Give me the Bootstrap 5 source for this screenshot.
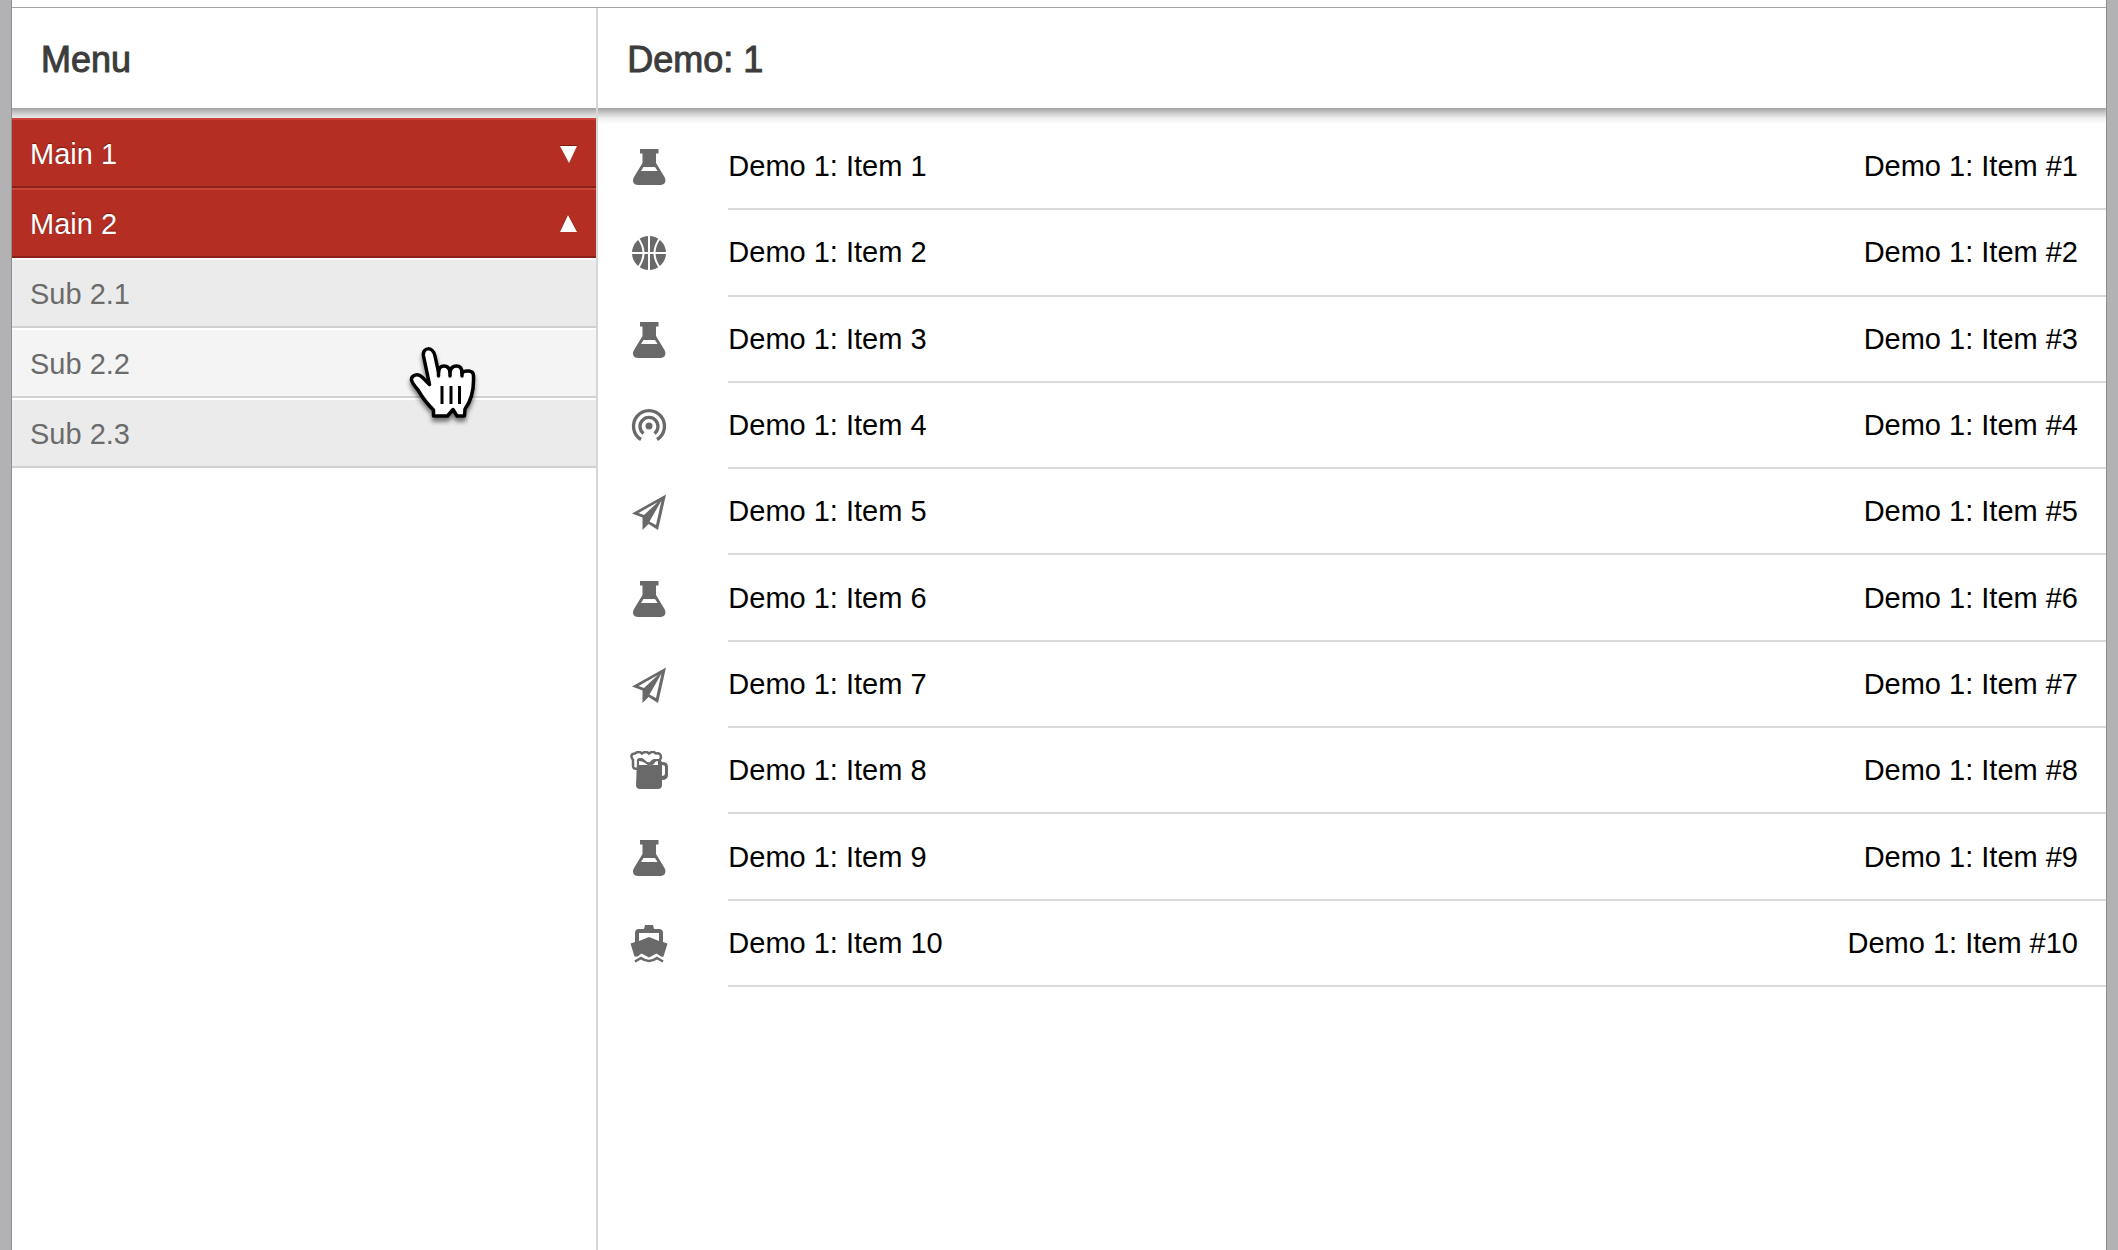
<!DOCTYPE html>
<html lang="en">
<head>
<meta charset="utf-8">
<meta name="viewport" content="width=device-width, initial-scale=1">
<title>Demo: 1</title>
<link href="https://cdn.jsdelivr.net/npm/bootstrap@5.3.0/dist/css/bootstrap.min.css" rel="stylesheet">
<style>
  body { font-family: "Liberation Sans", Arial, sans-serif; font-size: 29px; line-height: 36px; color: #000; background: #b2b2b5; }
  .app-frame { border-left: 12px solid #b2b2b5; border-right: 12px solid #b2b2b5; background: #fff; }
  .frame-edge { border: solid #8e8e90; border-width: 0 1px; margin: 0 -1px; }
  .top-strip { height: 8px; border-bottom: 1px solid #a5a5a5; }
  .side-pane { width: 28%; border-right: 2px solid #d6d6d6; }
  .pane-head { height: 100px; padding: 4px 29px 0; color: #3c3c3c; background: #fff; }
  .pane-head h1, .pane-head h2 { font-size: 36px; line-height: 44px; font-weight: 400; -webkit-text-stroke: 1px #3c3c3c; }
  .pane-body { background: linear-gradient(#a0a0a0, #c9c9c9 30%, #efefef 65%, #fff) top / 100% 16px no-repeat; }
  .menu-list { padding-top: 10px; position: relative; }
  .menu-link { height: 70px; padding: 2px 18px 0; text-decoration: none; width: 100%; border: 0; text-align: left; }
  .menu-main { color: #fff; background: #b42e23; border-top: 2px solid #cb4337; border-bottom: 2px solid #8a211a; text-shadow: 0 -1px 1px #7a1a13; }
  .menu-main svg { width: 18px; height: 18px; filter: drop-shadow(0 -1px 0 #7a1a13); }
  .menu-sub { color: #6b6b6b; background: #ebebeb; border-top: 2px solid #fff; border-bottom: 2px solid #d0d0d0; }
  .menu-sub.hovered { background: #f4f4f4; }
  .item-list { padding: 16px 0 0 31px; height: 879px; }
  .item-icon { width: 99px; flex: none; }
  .item-icon svg { width: 40px; height: 40px; fill: #696969; display: block; }
  .item-body { border-bottom: 2px solid #dadada; padding-right: 28px; }
  .hand { position: absolute; left: 378px; top: 222px; width: 100px; height: 100px; filter: drop-shadow(0 4px 2px rgba(0,0,0,.5)); pointer-events: none; }
</style>
</head>
<body>
<svg class="d-none" aria-hidden="true">
  <symbol id="flask" viewBox="0 0 40 40"><path fill-rule="evenodd" d="M11 2h18.500v4.500H27V16l8.500 14c2.500 5-.5 8-4 8H9c-4 0-6.500-3.500-4-8l8.500-14V6.500H11zM14.500 20l-2.500 4h16.500L26 20z"/></symbol>
  <symbol id="ball" viewBox="0 0 40 40"><circle cx="20" cy="20" r="17"/><path d="M20 2v36M2 20h36M9 5Q20 20 9 35M31 5Q20 20 31 35" fill="none" stroke="#fff" stroke-width="2"/></symbol>
  <symbol id="cast" viewBox="0 0 40 40"><circle cx="20" cy="20" r="3.500"/><path d="M14.500 27.500A9 9 0 1 1 25.500 27.500M12 33.500A15.500 15.500 0 1 1 28 33.500" fill="none" stroke="#696969" stroke-width="3.300"/></symbol>
  <symbol id="plane" viewBox="0 0 40 40"><path fill-rule="evenodd" d="M37 2.500L3 21.500l10.500 4V38l6-6 9.500 6zM32.500 8.500L20.500 29.500l6.500 3.500zM29 10L9.500 21l5.500 2z"/></symbol>
  <symbol id="beer" viewBox="0 0 40 40"><path fill-rule="evenodd" d="M8 11q-1-3 2-4h3l3 2q2 3 5 2 2-3 4-3h6l2 3h1q5 0 5 5v8q0 5-6 5v5q0 4-4 4H11q-4 0-4-4zM10 10v4h19v-4q-3 0-4 3-5 3-9-1-3-2-6-2zM33 14v11q3 0 3-3v-6q0-2-3-2z"/><path d="M8 17.500q-4 1-4-3V9Q0 3 6 2.500q4-3 7 0 4-3 7 0 4-3 7 0 5-1 5 4-1 3-3 4" fill="none" stroke="#696969" stroke-width="2.500"/></symbol>
  <symbol id="boat" viewBox="0 0 40 40"><path fill-rule="evenodd" d="M16 1h8l1 4h5q4 0 4 4v9l4.500 1.500-4 13q-2 1-4-1l-3-2-7.500 4-7.500-4-4 3h-3l-4-13L6 18V9q0-4 4-4h5zM10 9v8l10-4 10 4V9z"/><path d="M6 37.500l6-3.500q8 6 16 0l6 3.500" fill="none" stroke="#696969" stroke-width="2.500"/></symbol>
</svg>

<div class="app-frame min-vh-100 d-flex">
 <div class="frame-edge flex-grow-1 d-flex flex-column">
  <div class="top-strip"></div>
  <div class="d-flex flex-grow-1">
    <aside class="side-pane flex-shrink-0">
      <header class="pane-head d-flex align-items-center"><h2 class="m-0">Menu</h2></header>
      <nav class="pane-body menu-list" aria-label="Menu">
        <button type="button" class="menu-link menu-main d-flex align-items-center justify-content-between">Main 1 <svg viewBox="0 0 18 18" aria-hidden="true"><path fill="#fff" d="M0 1h17L9 18z"/></svg></button>
        <button type="button" class="menu-link menu-main d-flex align-items-center justify-content-between" aria-expanded="true">Main 2 <svg viewBox="0 0 18 18" aria-hidden="true"><path fill="#fff" d="M0 17h17L8 0z"/></svg></button>
        <a href="#" class="menu-link menu-sub d-flex align-items-center">Sub 2.1</a>
        <a href="#" class="menu-link menu-sub hovered d-flex align-items-center">Sub 2.2</a>
        <a href="#" class="menu-link menu-sub d-flex align-items-center">Sub 2.3</a>
        <svg class="hand" viewBox="0 0 100 100" aria-hidden="true"><g stroke="#000" stroke-width="3.500" stroke-linejoin="round" stroke-linecap="round"><path fill="#fff" d="M43.500 86V80Q35 72 28 60 22 53 21.500 50C21 45 28 43 32 47L39.500 54.500 33.500 26C32 17 43 16 45 26L48.500 42Q49 36 54 36T60 42Q61 36 66.500 36T72 43Q74 40.500 79 41T83.500 47C84 62 81 71 75 79L74.500 86H67L63 79.500 57.500 86Z"/><path fill="none" d="M48.500 40V46M60 40V46M72 41V46"/><path fill="none" stroke-linecap="butt" stroke-width="3" d="M52 56V74M61 56V74M69.500 56V74"/></g></svg>
      </nav>
    </aside>
    <main class="flex-grow-1">
      <header class="pane-head d-flex align-items-center"><h1 class="m-0">Demo: 1</h1></header>
      <ul class="pane-body item-list list-unstyled m-0 d-flex flex-column" id="items"></ul>
    </main>
  </div>
 </div>
</div>
<script src="https://cdn.jsdelivr.net/npm/bootstrap@5.3.0/dist/js/bootstrap.bundle.min.js"></script>
<script>
  const icons = ["flask", "ball", "flask", "cast", "plane", "flask", "plane", "beer", "flask", "boat"];
  document.getElementById("items").innerHTML = icons.map((icon, i) => `
    <li class="flex-fill d-flex align-items-stretch">
      <span class="item-icon d-flex align-items-center"><svg aria-hidden="true"><use href="#${icon}"/></svg></span>
      <div class="item-body flex-grow-1 d-flex align-items-center justify-content-between">
        <span>Demo 1: Item ${i + 1}</span><span>Demo 1: Item #${i + 1}</span>
      </div>
    </li>`).join("");
</script>
</body>
</html>
